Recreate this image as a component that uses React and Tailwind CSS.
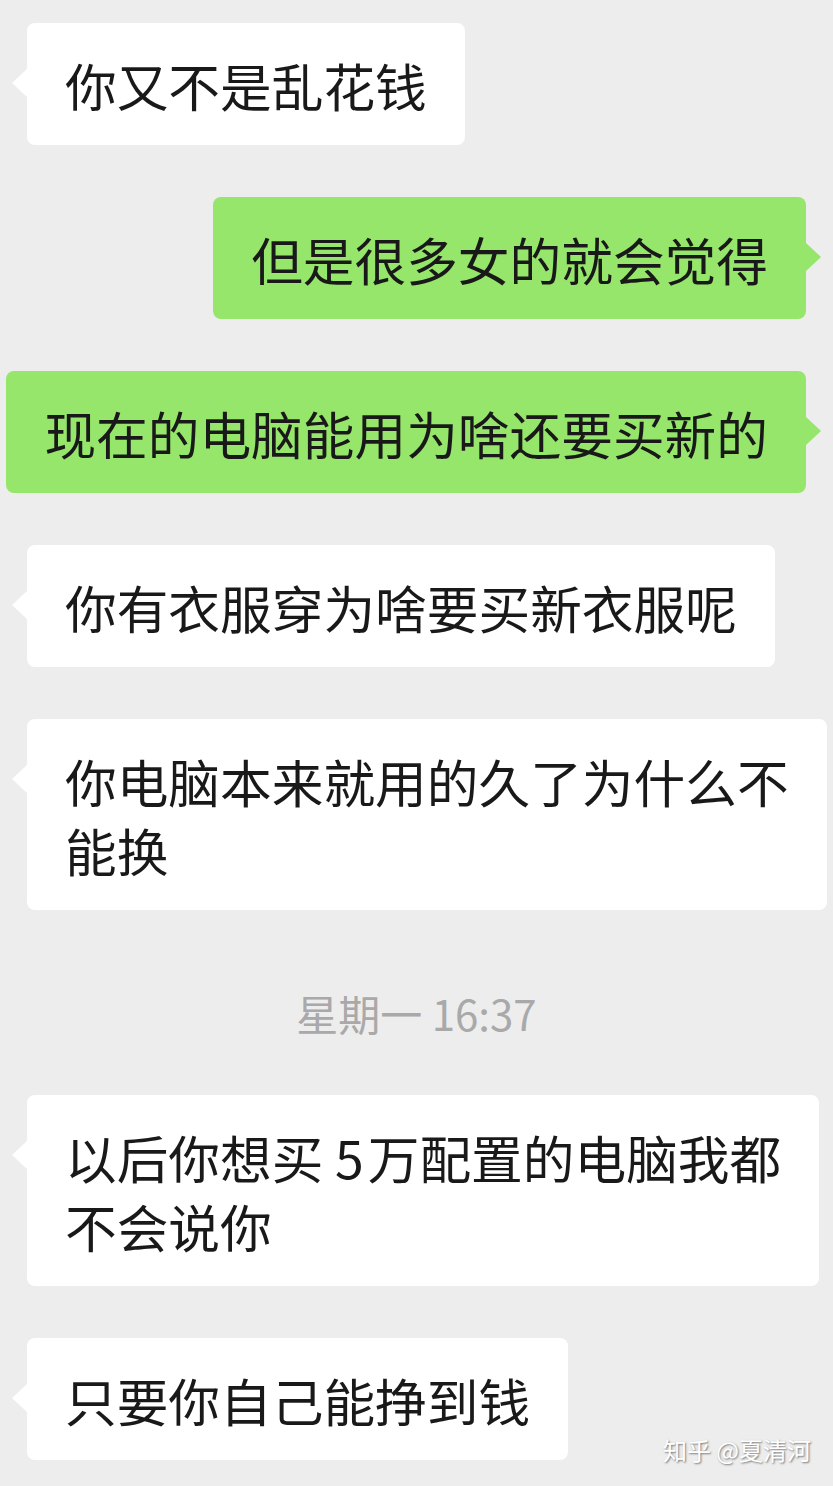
const FONT = "font-['Noto_Sans_CJK_SC','Noto_Sans',sans-serif]";

const messages = [
  { id: 1, side: 'left', lines: ['你又不是乱花钱'] },
  { id: 2, side: 'right', lines: ['但是很多女的就会觉得'] },
  { id: 3, side: 'right', lines: ['现在的电脑能用为啥还要买新的'] },
  { id: 4, side: 'left', lines: ['你有衣服穿为啥要买新衣服呢'] },
  { id: 5, side: 'left', lines: ['你电脑本来就用的久了为什么不', '能换'] },
  { id: 'time', time: '星期一 16:37' },
  {
    id: 6,
    side: 'left',
    lines: [
      <>
        以后你想买 <span className="mr-[4px]">5</span>万配置的电脑我都
      </>,
      '不会说你',
    ],
  },
  { id: 7, side: 'left', lines: ['只要你自己能挣到钱'] },
];

const Bubble = ({ side, lines }) => {
  const isMe = side === 'right';
  return (
    <div className={`flex ${isMe ? 'justify-end pr-[27px]' : 'justify-start pl-[27px]'}`}>
      <div
        className={`relative w-fit rounded-lg px-[38px] py-[26.5px] text-[51.7px] leading-[69px] text-[#191919] whitespace-nowrap ${
          isMe ? 'bg-[#95e66a]' : 'bg-white'
        }`}
      >
        {/* Tail */}
        <span
          className={`absolute top-[46px] h-0 w-0 border-y-[14px] border-y-transparent ${
            isMe
              ? 'right-[-15px] border-l-[15px] border-l-[#95e66a]'
              : 'left-[-15px] border-r-[15px] border-r-white'
          }`}
        />
        {lines.map((line, i) => (
          <div key={i}>{line}</div>
        ))}
      </div>
    </div>
  );
};

export default function App() {
  return (
    <div className={`relative min-h-[1486px] w-full overflow-hidden bg-[#ededed] ${FONT}`}>
      <div className="flex flex-col gap-[52px] pt-[23px]">
        {messages.map((m) =>
          m.time ? (
            <div
              key={m.id}
              className="mt-[27px] mb-[6px] text-center text-[42px] leading-[48px] text-[#a9a9a9]"
            >
              {m.time}
            </div>
          ) : (
            <Bubble key={m.id} side={m.side} lines={m.lines} />
          )
        )}
      </div>

      {/* Watermark */}
      <div className="absolute right-[22px] top-[1434px] text-[24px] leading-[32px] text-white [text-shadow:1px_1px_2px_rgba(0,0,0,0.5)]">
        知乎 @夏清河
      </div>
    </div>
  );
}
